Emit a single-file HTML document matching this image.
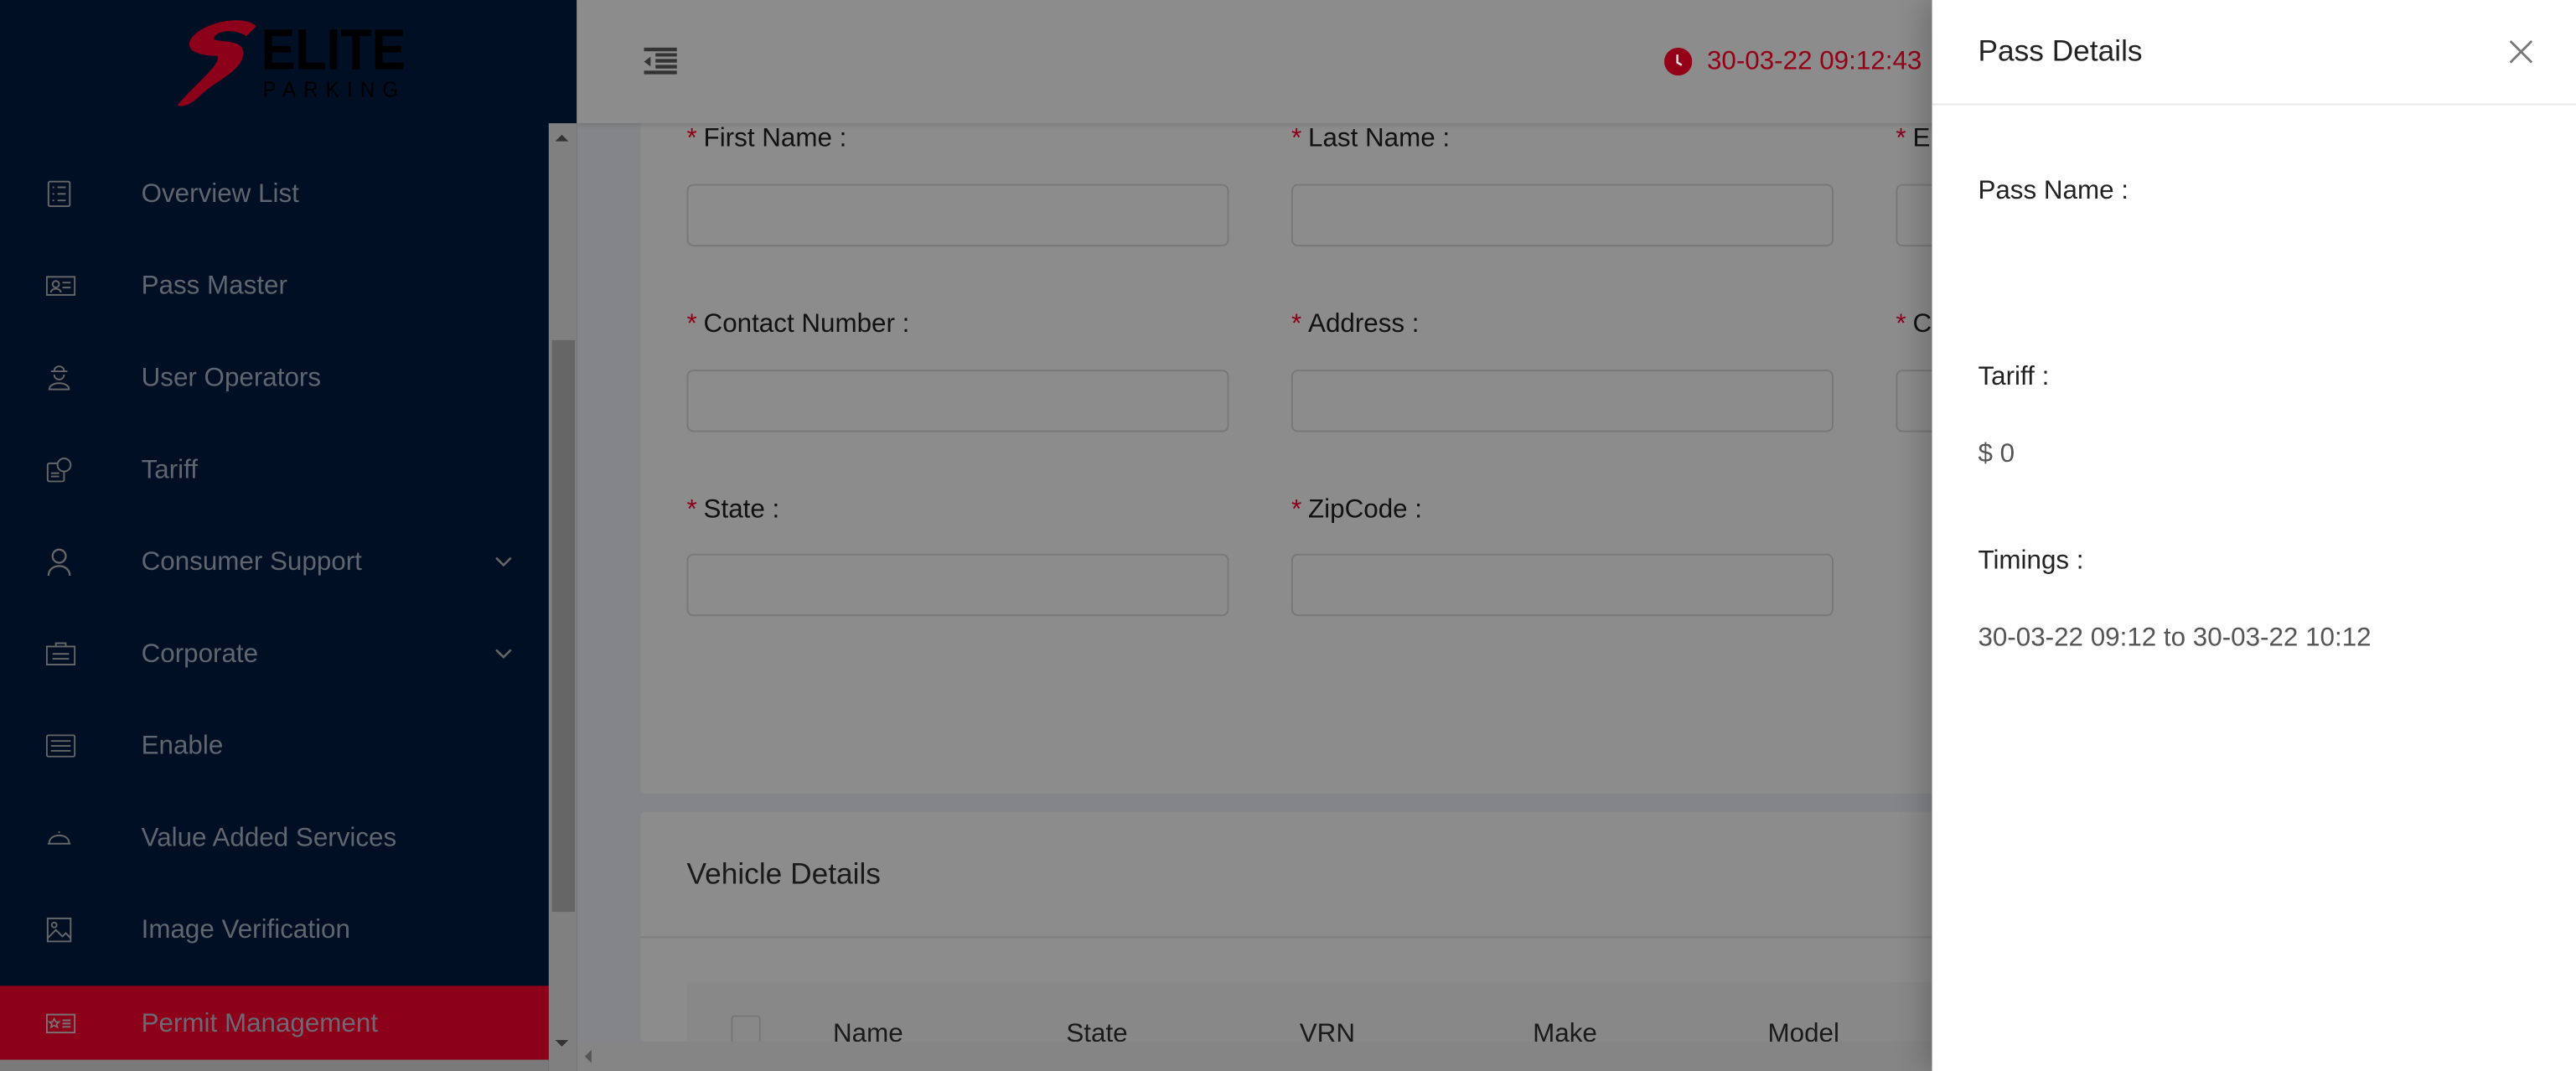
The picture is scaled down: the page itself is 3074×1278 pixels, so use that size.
<!DOCTYPE html>
<html><head><meta charset="utf-8"><style>
html,body{margin:0;padding:0;width:3074px;height:1278px;overflow:hidden;background:#848588;}
#w{position:absolute;left:0;top:0;width:1568px;height:652px;transform:scale(1.9605);transform-origin:0 0;font-family:"Liberation Sans",sans-serif;overflow:hidden;background:#848588;}
.abs{position:absolute;}
.side{left:0;top:0;width:351px;height:652px;background:#000f24;}
.mi{position:absolute;left:0;width:334px;height:45px;color:#5f6670;font-size:16px;}
.mi span{position:absolute;left:86px;top:50%;transform:translateY(-45%);white-space:nowrap;}
.mi svg{position:absolute;left:28px;top:50%;transform:translateY(-50%);}
.mi .ch{position:absolute;left:301px;}
.card{background:#8c8c8c;}
.lbl{position:absolute;font-size:16px;color:#111;white-space:nowrap;margin-top:2px;}
.lbl b{color:#8c0019;font-weight:normal;margin-right:4px;}
.inp{position:absolute;width:328px;height:36px;border:1px solid #787878;border-radius:4px;}
.d{position:absolute;font-size:16px;white-space:nowrap;margin-top:2px;}
</style></head><body><div id="w">
<div class="abs card" style="left:390px;top:60px;width:800px;height:423px;"></div>
<div class="abs card" style="left:390px;top:494px;width:800px;height:160px;border-radius:3px;"></div>
<div class="abs" style="left:390px;top:570px;width:800px;height:1px;background:#7e7e7e;"></div>
<div class="abs" style="left:418px;top:598px;width:780px;height:40px;background:#888888;"></div>
<div class="abs" style="left:418px;top:522px;font-size:18px;color:#1a1a1a;">Vehicle Details</div>
<div class="abs" style="left:445px;top:618px;width:16px;height:16px;border:1px solid #777;border-radius:2px;"></div>
<div class="d" style="left:507px;top:619px;color:#1a1a1a;">Name</div>
<div class="d" style="left:649px;top:619px;color:#1a1a1a;">State</div>
<div class="d" style="left:791px;top:619px;color:#1a1a1a;">VRN</div>
<div class="d" style="left:933px;top:619px;color:#1a1a1a;">Make</div>
<div class="d" style="left:1076px;top:619px;color:#1a1a1a;">Model</div>

<div class="lbl" style="left:418px;top:74px;"><b>*</b>First Name :</div>
<div class="lbl" style="left:786px;top:74px;"><b>*</b>Last Name :</div>
<div class="lbl" style="left:1154px;top:74px;"><b>*</b>Email</div>
<div class="inp" style="left:418px;top:112px;"></div>
<div class="inp" style="left:786px;top:112px;"></div>
<div class="inp" style="left:1154px;top:112px;"></div>
<div class="lbl" style="left:418px;top:187px;"><b>*</b>Contact Number :</div>
<div class="lbl" style="left:786px;top:187px;"><b>*</b>Address :</div>
<div class="lbl" style="left:1154px;top:187px;"><b>*</b>City</div>
<div class="inp" style="left:418px;top:225px;"></div>
<div class="inp" style="left:786px;top:225px;"></div>
<div class="inp" style="left:1154px;top:225px;"></div>
<div class="lbl" style="left:418px;top:300px;"><b>*</b>State :</div>
<div class="lbl" style="left:786px;top:300px;"><b>*</b>ZipCode :</div>
<div class="inp" style="left:418px;top:337px;"></div>
<div class="inp" style="left:786px;top:337px;"></div>

<div class="abs" style="left:351px;top:0;width:830px;height:75px;background:#8c8c8c;box-shadow:0 1px 3px rgba(0,0,0,0.12);"></div>
<svg class="abs" style="left:391px;top:28px" width="22" height="18" viewBox="0 0 22 18"><rect x="1" y="1" width="20" height="2.2" fill="#333"/><rect x="8" y="7.9" width="13" height="2.2" fill="#333"/><rect x="8" y="11.5" width="13" height="2.2" fill="#333"/><rect x="1" y="15" width="20" height="2.2" fill="#333"/><path d="M1 9.5 L5 6.5 L5 12.5Z" fill="#333"/><rect x="8" y="4.4" width="13" height="2" fill="#333"/></svg>
<svg class="abs" style="left:1013px;top:29px" width="17" height="17" viewBox="0 0 16 16"><circle cx="8" cy="8" r="8" fill="#950019"/><path d="M7.5 4 V8.5 L10 10" stroke="#ddd" stroke-width="1.2" fill="none"/></svg>
<div class="abs" style="left:1039px;top:29px;font-size:16px;color:#950019;white-space:nowrap;">30-03-22 09:12:43</div>

<div class="abs" style="left:351px;top:634px;width:830px;height:18px;background:#858585;"></div>
<div class="abs" style="left:356px;top:639px;width:0;height:0;border-top:4px solid transparent;border-bottom:4px solid transparent;border-right:4px solid #555;"></div>

<div class="abs side">
  <svg class="abs" style="left:104px;top:10px" width="150" height="56" viewBox="0 0 150 56">
    <path d="M52 6 C44 -2 18 4 12 14 C8 22 20 24 28 24 C32 28 14 42 4 54 C8 56 14 52 18 48 C26 40 42 34 44 24 C46 14 32 16 26 14 C26 10 36 6 46 12 Z" fill="#8c0019"/>
    <text x="55" y="32" font-family="Liberation Sans Narrow,Liberation Sans,sans-serif" font-weight="bold" font-size="35" fill="#000" textLength="88" lengthAdjust="spacingAndGlyphs">ELITE</text>
    <text x="56" y="49" font-family="Liberation Sans,sans-serif" font-size="13" fill="#000" textLength="87" lengthAdjust="spacingAndGlyphs" letter-spacing="5">PARKING</text>
  </svg>
  <div class="mi" style="top:95px"><svg width="16" height="16" viewBox="0 0 16 16"><rect x="1.5" y="0.5" width="13" height="15" rx="1" fill="none" stroke="#666" stroke-width="1"/><path d="M4 4h1M7 4h5M4 8h1M7 8h5M4 12h1M7 12h5" stroke="#666"/></svg><span>Overview List</span></div>
  <div class="mi" style="top:151px"><svg width="18" height="14" viewBox="0 0 18 14"><rect x="0.5" y="1.5" width="17" height="11" fill="none" stroke="#666"/><circle cx="6" cy="6" r="2" fill="none" stroke="#666"/><path d="M3 11c0-3 6-3 6 0M10 5h5M10 8h5" stroke="#666" fill="none"/></svg><span>Pass Master</span></div>
  <div class="mi" style="top:207px"><svg width="16" height="16" viewBox="0 0 16 16"><path d="M3 4h10M5 4c0-4 6-4 6 0M5 6a3 3 0 0 0 6 0M2 15c0-5 12-5 12 0z" fill="none" stroke="#666"/></svg><span>User Operators</span></div>
  <div class="mi" style="top:263px"><svg width="16" height="16" viewBox="0 0 16 16"><rect x="1" y="4" width="10" height="11" rx="1" fill="none" stroke="#666"/><circle cx="11" cy="5" r="4" fill="#000f24" stroke="#666"/><path d="M3 10h5M3 12h5" stroke="#666"/></svg><span>Tariff</span></div>
  <div class="mi" style="top:319px"><svg width="16" height="17" viewBox="0 0 16 17"><circle cx="8" cy="5" r="4" fill="none" stroke="#666" stroke-width="1.2"/><path d="M1.5 17c0-8 13-8 13 0" fill="none" stroke="#666" stroke-width="1.2"/></svg><span>Consumer Support</span><svg class="ch" width="11" height="7" viewBox="0 0 11 7"><path d="M1 1l4.5 4.5L10 1" stroke="#666" fill="none" stroke-width="1.3"/></svg></div>
  <div class="mi" style="top:375px"><svg width="18" height="14" viewBox="0 0 18 14"><rect x="0.5" y="2.5" width="17" height="11" fill="none" stroke="#666"/><path d="M6 2.5V0.5h6v2M4 7h10M4 10h10" stroke="#666" fill="none"/></svg><span>Corporate</span><svg class="ch" width="11" height="7" viewBox="0 0 11 7"><path d="M1 1l4.5 4.5L10 1" stroke="#666" fill="none" stroke-width="1.3"/></svg></div>
  <div class="mi" style="top:431px"><svg width="18" height="14" viewBox="0 0 18 14"><rect x="0.5" y="0.5" width="17" height="13" rx="1" fill="none" stroke="#666"/><path d="M3 4h12M3 7h12M3 10h12" stroke="#666"/></svg><span>Enable</span></div>
  <div class="mi" style="top:487px"><svg width="16" height="10" viewBox="0 0 16 10"><path d="M2 8c0-6 12-6 12 0M1 8.5h14M8 2V1" fill="none" stroke="#666"/></svg><span>Value Added Services</span></div>
  <div class="mi" style="top:543px"><svg width="16" height="16" viewBox="0 0 16 16"><rect x="1" y="1" width="14" height="14" fill="none" stroke="#666"/><circle cx="5" cy="5" r="1.5" fill="none" stroke="#666"/><path d="M1 13l5-5 4 4 2-2 3 3" fill="none" stroke="#666"/></svg><span>Image Verification</span></div>
  <div class="mi" style="top:600px;background:#8c001a;color:#6a6a74;"><svg width="18" height="12" viewBox="0 0 18 12"><rect x="0.5" y="0.5" width="17" height="11" fill="none" stroke="#777"/><path d="M5 3l1 2h2l-1.6 1.3.6 2-2-1.2-2 1.2.6-2L2 5h2z" fill="none" stroke="#777" stroke-width=".8"/><path d="M10 4h5M10 6h5M10 8h5" stroke="#777"/></svg><span>Permit Management</span></div>
  <div class="abs" style="left:334px;top:75px;width:17px;height:577px;background:#808080;"></div>
  <div class="abs" style="left:336px;top:207px;width:14px;height:348px;background:#666;"></div>
  <div class="abs" style="left:338px;top:82px;width:0;height:0;border-left:4px solid transparent;border-right:4px solid transparent;border-bottom:4px solid #333;"></div>
  <div class="abs" style="left:338px;top:633px;width:0;height:0;border-left:4px solid transparent;border-right:4px solid transparent;border-top:4px solid #333;"></div>
  <div class="abs" style="left:0;top:645px;width:334px;height:7px;background:#7a7a7a;"></div>
</div>

<div class="abs" style="left:1176px;top:0;width:392px;height:652px;background:#fff;box-shadow:-6px 0 16px rgba(0,0,0,0.2);">
  <div class="abs" style="left:28px;top:21px;font-size:18px;color:#222;">Pass Details</div>
  <svg class="abs" style="left:351px;top:24px" width="15" height="15" viewBox="0 0 15 15"><path d="M1 1L14 14M14 1L1 14" stroke="#777" stroke-width="1.4"/></svg>
  <div class="abs" style="left:0;top:63px;width:392px;height:1px;background:#e8e8e8;"></div>
  <div class="d" style="left:28px;top:106px;color:#222;">Pass Name :</div>
  <div class="d" style="left:28px;top:219px;color:#222;">Tariff :</div>
  <div class="d" style="left:28px;top:266px;color:#555;">$ 0</div>
  <div class="d" style="left:28px;top:331px;color:#222;">Timings :</div>
  <div class="d" style="left:28px;top:378px;color:#555;">30-03-22 09:12 to 30-03-22 10:12</div>
</div>
</div></body></html>
